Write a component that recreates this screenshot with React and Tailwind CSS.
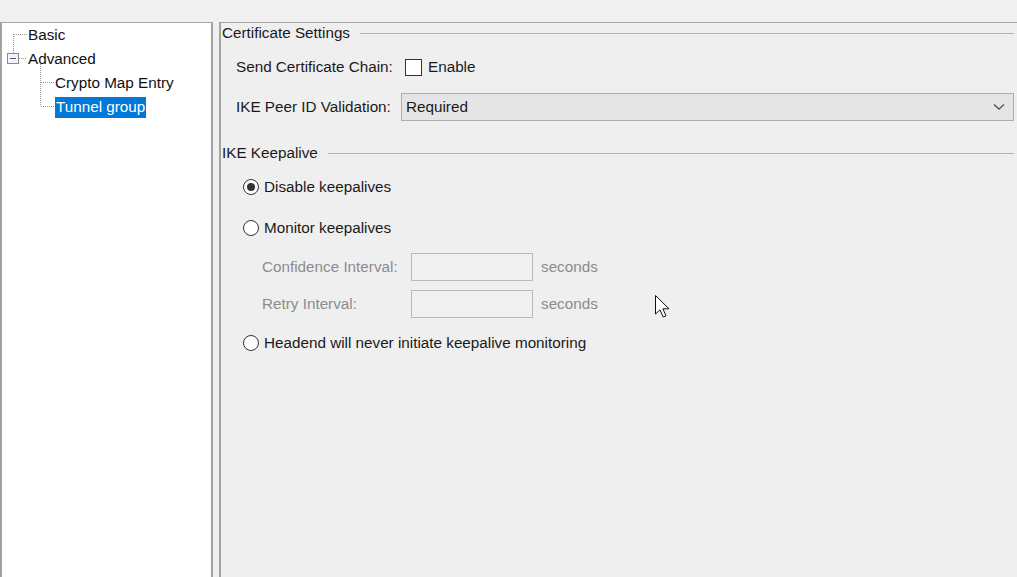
import React from "react";

function Radio({ checked, label }) {
  return (
    <div className="flex items-center h-[20px] pl-[22px]">
      <div className="w-[16px] h-[16px] rounded-full border border-[#333] bg-white flex items-center justify-center">
        {checked && <div className="w-[8px] h-[8px] rounded-full bg-[#333]" />}
      </div>
      <span className="ml-[5px] text-[#1a1a1a]">{label}</span>
    </div>
  );
}

function Title({ children }) {
  return (
    <div className="flex items-center h-[20px] pl-[1px]">
      <span className="text-[#1a1a1a]">{children}</span>
      <div className="flex-1 ml-[10px] h-px bg-[#b4b4b4]" />
    </div>
  );
}

function IntervalRow({ label, className }) {
  return (
    <div className={"flex items-center h-[28px] pl-[41px] " + className}>
      <span className="w-[149px] text-[#8c8c8c]">{label}</span>
      <div className="w-[122px] h-[28px] border border-[#b9b9b9] bg-[#f0f0f0]" />
      <span className="ml-[8px] text-[#8c8c8c]">seconds</span>
    </div>
  );
}

export default function App() {
  return (
    <div className="w-full h-[577px] bg-[#f0f0f0] overflow-hidden relative flex flex-col font-['Liberation_Sans',Arial,sans-serif] text-[15.25px] leading-none">
      <div className="h-[22px] shrink-0" />
      <div className="flex flex-1 min-h-0">
        {/* Left tree panel */}
        <div className="w-[213px] shrink-0 bg-white border-l-2 border-r-2 border-t border-[#a3a3a3] relative">
          <svg className="absolute left-0 top-0" width="70" height="120" viewBox="2 23 70 120">
            <g stroke="#9a9a9a" strokeWidth="1" strokeDasharray="1 1" fill="none" shapeRendering="crispEdges">
              <line x1="13.5" y1="34" x2="13.5" y2="53" />
              <line x1="14" y1="34.5" x2="27" y2="34.5" />
              <line x1="19" y1="58.5" x2="27" y2="58.5" />
              <line x1="40.5" y1="64" x2="40.5" y2="106" />
              <line x1="41" y1="82.5" x2="54" y2="82.5" />
              <line x1="41" y1="106.5" x2="54" y2="106.5" />
            </g>
            <rect x="7.5" y="53.5" width="11" height="10" fill="#f4f4f4" stroke="#8a8a8a" shapeRendering="crispEdges" />
            <line x1="10" y1="58.5" x2="16" y2="58.5" stroke="#3b5a8a" strokeWidth="1" shapeRendering="crispEdges" />
          </svg>
          <div className="flex flex-col text-[#111]">
            <div className="h-[24px] flex items-center pl-[26px]">Basic</div>
            <div className="h-[24px] flex items-center pl-[26px]">Advanced</div>
            <div className="h-[24px] flex items-center pl-[53px]">Crypto Map Entry</div>
            <div className="h-[24px] flex items-center pl-[53px]">
              <span className="bg-[#0078d7] text-white h-[21px] flex items-center px-[1px]">Tunnel group</span>
            </div>
          </div>
        </div>
        <div className="w-[6px] shrink-0" />
        {/* Right panel */}
        <div className="flex-1 border-l-2 border-t border-[#a3a3a3] bg-[#efefef] flex flex-col pr-[3px]">
          <Title>Certificate Settings</Title>
          <div className="flex items-center h-[24px] mt-[12px] pl-[15px]">
            <span className="w-[169px] text-[#1a1a1a]">Send Certificate Chain:</span>
            <div className="w-[17px] h-[17px] border border-[#333] bg-white" />
            <span className="ml-[6px] text-[#1a1a1a]">Enable</span>
          </div>
          <div className="flex items-center h-[28px] mt-[14px] pl-[15px]">
            <span className="w-[165px] text-[#1a1a1a]">IKE Peer ID Validation:</span>
            <div className="flex-1 h-[28px] border border-[#adadad] bg-[#e5e5e5] flex items-center pl-[4px] pr-[8px]">
              <span className="flex-1 text-[#1a1a1a]">Required</span>
              <svg width="12" height="8" viewBox="0 0 12 8">
                <polyline points="1,1.5 6,6 11,1.5" fill="none" stroke="#555" strokeWidth="1.4" />
              </svg>
            </div>
          </div>
          <div className="mt-[22px]">
            <Title>IKE Keepalive</Title>
          </div>
          <div className="mt-[14px]">
            <Radio checked label="Disable keepalives" />
          </div>
          <div className="mt-[21px]">
            <Radio label="Monitor keepalives" />
          </div>
          <IntervalRow label="Confidence Interval:" className="mt-[15px]" />
          <IntervalRow label="Retry Interval:" className="mt-[9px]" />
          <div className="mt-[15px]">
            <Radio label="Headend will never initiate keepalive monitoring" />
          </div>
        </div>
      </div>
      {/* mouse cursor */}
      <svg className="absolute left-[655px] top-[295px]" width="18" height="27" viewBox="0 0 18 27">
        <path d="M0.5 0.5 L0.5 19 L5 14.8 L8.2 22 L11 20.8 L7.9 13.8 L14 13.8 Z" fill="white" stroke="#111" strokeWidth="1" strokeLinejoin="miter" />
      </svg>
    </div>
  );
}
